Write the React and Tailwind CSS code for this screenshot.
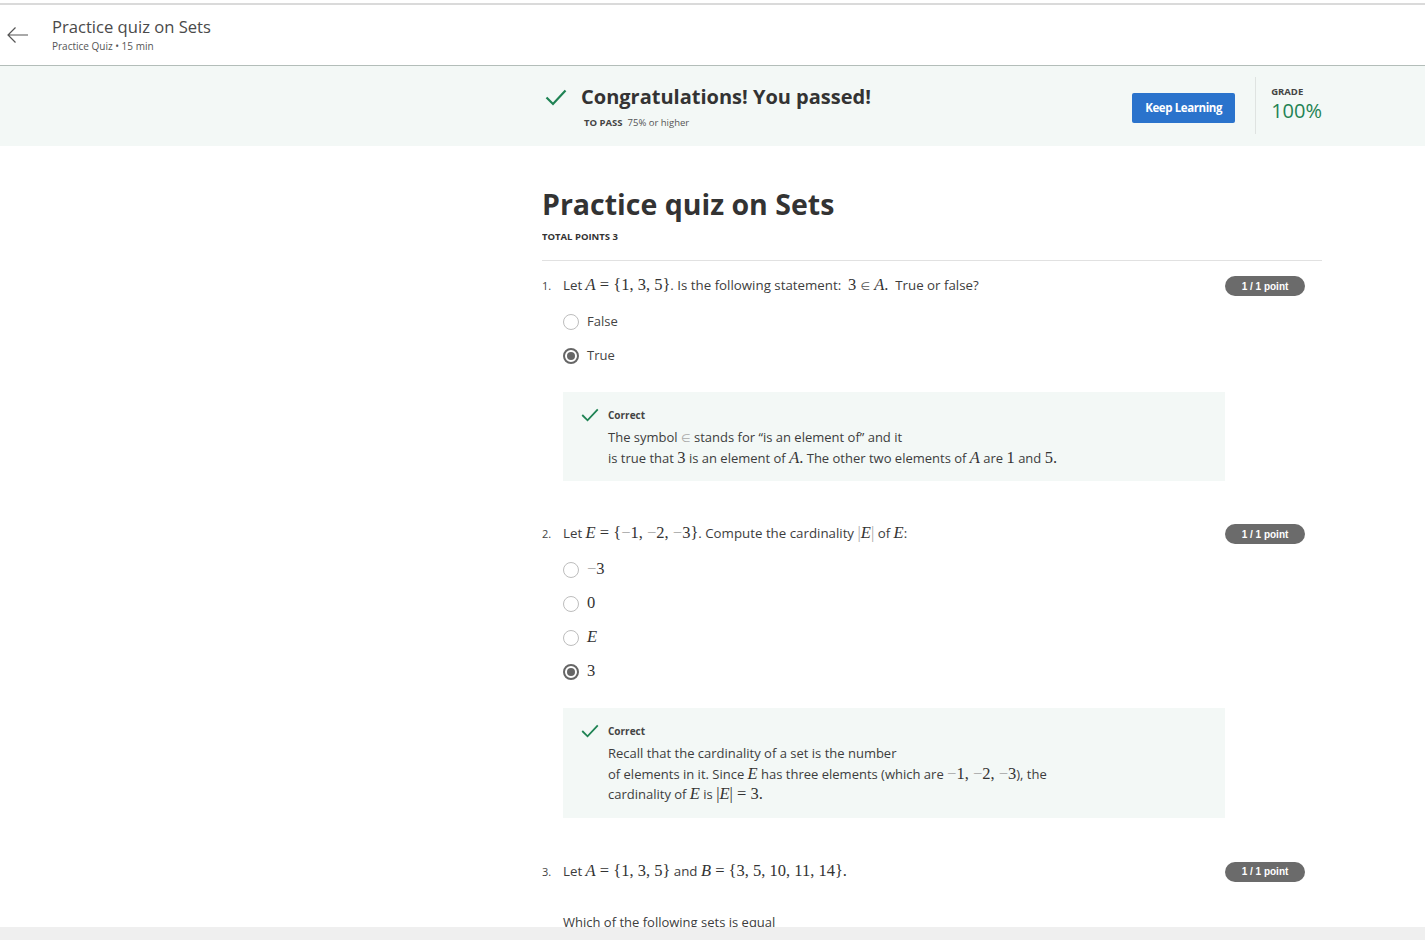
import React from 'react'

const Check = ({ w = 22, h = 17 }) => (
  <svg width={w} height={h} viewBox="0 0 22 17" fill="none">
    <polyline points="1.5,8.5 8,15 20.5,1.5" stroke="#1f8354" strokeWidth="2.2" />
  </svg>
)

const M = ({ children }) => (
  <span className="font-['Liberation_Serif',serif] text-[16.5px] leading-[14px] text-[#333]">{children}</span>
)
const V = ({ children }) => <i>{children}</i>
const In = ({ light }) => (
  <span className={`font-['DejaVu_Sans',sans-serif] text-[11px] leading-[10px] ${light ? 'text-[#aaa]' : 'text-[#555]'}`}>∈</span>
)
const Minus = () => <span className="text-[#aaa]">−</span>

function Radio({ checked }) {
  return checked ? (
    <span className="w-4 h-4 rounded-full border-2 border-[#666] flex items-center justify-center shrink-0">
      <span className="w-2 h-2 rounded-full bg-[#666]" />
    </span>
  ) : (
    <span className="w-4 h-4 rounded-full border-[1.5px] border-[#bdbdbd] shrink-0" />
  )
}

function Option({ checked, children }) {
  return (
    <div className="flex items-center gap-[8px] h-[34px]">
      <Radio checked={checked} />
      <span className="text-[13px] text-[#444]">{children}</span>
    </div>
  )
}

function Badge() {
  return (
    <span className="ml-auto mr-[17px] w-[80px] h-[20px] rounded-full bg-[#6b6b6b] text-white text-[10px] font-bold font-['Liberation_Sans',sans-serif] flex items-center justify-center shrink-0">
      1 / 1 point
    </span>
  )
}

function Feedback({ children }) {
  return (
    <div className="ml-[21px] w-[662px] bg-[#f3f8f6] flex pl-[18px] pt-[16px] pb-[13px]">
      <div className="w-[27px]"><Check w={18} h={14} /></div>
      <div>
        <div className="text-[10px] font-bold text-[#444] leading-[14px]">Correct</div>
        <div className="text-[13px] text-[#3d3d3d] leading-[20.5px] mt-[5px]">{children}</div>
      </div>
    </div>
  )
}

function Question({ n, children }) {
  return (
    <div className="flex items-center h-[22px]">
      <div className="flex items-baseline">
        <span className="w-[21px] text-[11px] text-[#444]">{n}.</span>
        <span className="text-[13.3px] text-[#3d3d3d]">{children}</span>
      </div>
      <Badge />
    </div>
  )
}

export default function App() {
  return (
    <div className="w-[1425px] h-[940px] overflow-hidden bg-white font-['Open_Sans',sans-serif] flex flex-col">
      <div className="h-[3px] bg-white shrink-0" />
      <div className="h-[2px] bg-[#dadada] shrink-0" />
      <header className="h-[61px] flex items-center border-b border-[#b3bdb9] shrink-0">
        <svg className="ml-[6px]" width="23" height="18" viewBox="0 0 23 18" fill="none">
          <path d="M22 9H2M9.5 1.5L2 9l7.5 7.5" stroke="#555" strokeWidth="1.2" />
        </svg>
        <div className="ml-[23px] -mt-[2px]">
          <div className="text-[16.6px] text-[#4a4a4a] leading-[22px]">Practice quiz on Sets</div>
          <div className="text-[10px] text-[#555] leading-[14px] mt-[1px]">Practice Quiz • 15 min</div>
        </div>
      </header>
      <div className="h-[80px] bg-[#f3f8f6] shrink-0 flex">
        <div className="ml-[542px] w-[780px] flex items-start">
          <div className="pt-[20px] pl-[3px]">
            <div className="flex items-center">
              <Check />
              <span className="ml-[14px] text-[20px] font-bold text-[#333] leading-[22px]">Congratulations! You passed!</span>
            </div>
            <div className="ml-[39px] mt-[8px] text-[9.5px] text-[#444]">
              <span className="font-bold">TO PASS</span>
              <span className="ml-[5px] text-[#555]">75% or higher</span>
            </div>
          </div>
          <div className="flex-1" />
          <button className="mt-[27px] w-[103px] h-[30px] bg-[#2a73cc] rounded-[2px] text-white text-[11.5px] font-bold tracking-[-0.4px]">Keep Learning</button>
          <div className="ml-[20px] mt-[11px] h-[57px] w-px bg-[#dfe3e1]" />
          <div className="ml-[15px] pt-[19px]">
            <div className="text-[9.5px] font-bold text-[#444] leading-[14px]">GRADE</div>
            <div className="text-[20px] text-[#1f8354] leading-[24px]">100%</div>
          </div>
        </div>
      </div>
      <main className="flex-1 ml-[542px] w-[780px] overflow-hidden">
        <h1 className="mt-[40px] text-[28.5px] font-bold text-[#333] leading-[36px]">Practice quiz on Sets</h1>
        <div className="mt-[8px] text-[9.5px] font-bold text-[#333] leading-[13px]">TOTAL POINTS 3</div>
        <div className="mt-[17px] h-px bg-[#e1e1e1]" />

        <div className="mt-[14px]">
          <Question n={1}>
            Let <M><V>A</V> = {'{'}1, 3, 5{'}'}</M>. Is the following statement:&nbsp; <M>3 <In /> <V>A</V>.</M>&nbsp; True or false?
          </Question>
          <div className="ml-[21px] mt-[8px]">
            <Option>False</Option>
            <Option checked>True</Option>
          </div>
          <div className="mt-[19px]">
            <Feedback>
              The symbol <In light /> stands for “is an element of” and it<br />
              is true that <M>3</M> is an element of <M><V>A</V>.</M> The other two elements of <M><V>A</V></M> are <M>1</M> and <M>5.</M>
            </Feedback>
          </div>
        </div>

        <div className="mt-[42px]">
          <Question n={2}>
            Let <M><V>E</V> = {'{'}<Minus />1, <Minus />2, <Minus />3{'}'}</M>. Compute the cardinality <M><span className="text-[#aaa]">|</span><V>E</V><span className="text-[#aaa]">|</span></M> of <M><V>E</V></M>:
          </Question>
          <div className="ml-[21px] mt-[8px]">
            <Option><M><Minus />3</M></Option>
            <Option><M>0</M></Option>
            <Option><M><V>E</V></M></Option>
            <Option checked><M>3</M></Option>
          </div>
          <div className="mt-[19px]">
            <Feedback>
              Recall that the cardinality of a set is the number<br />
              of elements in it. Since <M><V>E</V></M> has three elements (which are <M><Minus />1, <Minus />2, <Minus />3</M>), the<br />
              cardinality of <M><V>E</V></M> is <M>|<V>E</V>| = 3.</M>
            </Feedback>
          </div>
        </div>

        <div className="mt-[43px]">
          <Question n={3}>
            Let <M><V>A</V> = {'{'}1, 3, 5{'}'}</M> and <M><V>B</V> = {'{'}3, 5, 10, 11, 14{'}'}.</M>
          </Question>
          <div className="ml-[21px] mt-[30px] text-[13px] text-[#3d3d3d] leading-[18px]">Which of the following sets is equal</div>
        </div>
      </main>
      <div className="h-[13px] bg-[#efefef] shrink-0" />
    </div>
  )
}
